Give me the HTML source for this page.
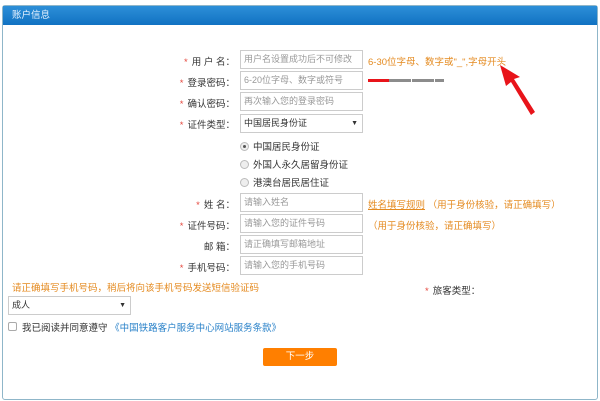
<!DOCTYPE html>
<html><head><meta charset="utf-8"><style>
body{margin:0;width:600px;height:401px;background:#fff;font-family:"Liberation Sans","Noto Sans CJK SC",sans-serif;font-size:9.5px;color:#333;position:relative;overflow:hidden}
.p{position:absolute}
.panel{left:2px;top:5px;width:594px;height:393px;border:1px solid #8fb6c9;border-radius:3px}
.hd{left:3px;top:6px;width:594px;height:19px;background:linear-gradient(#2d8fd8,#1172c2);color:#e8f3ff;font-size:9.5px;line-height:19px;text-indent:9px}
.lb{width:80px;text-align:right;left:155px}
.r{color:#e5483e;margin-right:4px}
.in{left:240px;width:121px;height:17px;border:1px solid #ccc;color:#999;line-height:17px;text-indent:3px;font-size:9px;white-space:nowrap;overflow:hidden}
.o{color:#e48a1f}
.rd{display:inline-block;width:7px;height:7px;border:1px solid #bbb;border-radius:50%;background:#eee;vertical-align:-1px;margin-right:4px;position:relative}
</style></head><body>
<div class="p panel"></div>
<div class="p hd">账户信息</div>

<div class="p lb" style="top:54px"><span class="r">*</span>用 户 名：</div>
<div class="p in" style="top:50px">用户名设置成功后不可修改</div>
<div class="p o" style="left:368px;top:54px">6-30位字母、数字或"_",字母开头</div>

<div class="p lb" style="top:75px"><span class="r">*</span>登录密码：</div>
<div class="p in" style="top:71px">6-20位字母、数字或符号</div>
<div class="p" style="left:368px;top:79px;width:21px;height:3px;background:#e8141a"></div>
<div class="p" style="left:389px;top:79px;width:55px;height:3px;background:repeating-linear-gradient(90deg,#8c8c8c 0 22px,#fff 22px 23px)"></div>

<div class="p lb" style="top:96px"><span class="r">*</span>确认密码：</div>
<div class="p in" style="top:92px">再次输入您的登录密码</div>

<div class="p lb" style="top:117px"><span class="r">*</span>证件类型：</div>
<div class="p in" style="top:114px;color:#333">中国居民身份证<span style="position:absolute;right:4px;font-size:7px">▼</span></div>

<div class="p" style="left:240px;top:139px"><span class="rd"><span style="position:absolute;left:2px;top:2px;width:3px;height:3px;border-radius:50%;background:#555"></span></span>中国居民身份证</div>
<div class="p" style="left:240px;top:157px"><span class="rd"></span>外国人永久居留身份证</div>
<div class="p" style="left:240px;top:175px"><span class="rd"></span>港澳台居民居住证</div>

<div class="p lb" style="top:197px"><span class="r">*</span>姓 名：</div>
<div class="p in" style="top:193px">请输入姓名</div>
<div class="p o" style="left:368px;top:197px"><u>姓名填写规则</u> （用于身份核验，请正确填写）</div>

<div class="p lb" style="top:218px"><span class="r">*</span>证件号码：</div>
<div class="p in" style="top:214px">请输入您的证件号码</div>
<div class="p o" style="left:368px;top:218px">（用于身份核验，请正确填写）</div>

<div class="p lb" style="top:239px">邮 箱：</div>
<div class="p in" style="top:235px">请正确填写邮箱地址</div>

<div class="p lb" style="top:260px"><span class="r">*</span>手机号码：</div>
<div class="p in" style="top:256px">请输入您的手机号码</div>

<div class="p o" style="left:12px;top:280px">请正确填写手机号码，稍后将向该手机号码发送短信验证码</div>
<div class="p" style="left:425px;top:283px"><span class="r">*</span>旅客类型：</div>
<div class="p in" style="left:8px;top:296px;color:#333">成人<span style="position:absolute;right:4px;font-size:7px">▼</span></div>

<div class="p" style="left:8px;top:322px;width:7px;height:7px;border:1px solid #aaa;border-radius:2px"></div>
<div class="p" style="left:22px;top:320px">我已阅读并同意遵守 <span style="color:#2a82c9">《中国铁路客户服务中心网站服务条款》</span></div>

<div class="p" style="left:263px;top:348px;width:74px;height:18px;background:#ff7f00;border-radius:2px;color:#fff;text-align:center;line-height:18px">下一步</div>

<svg class="p" style="left:490px;top:60px" width="60" height="60"><polygon points="10,5 30,17 24,19 45,52 41,55 21,22 16,26" fill="#e8141a"/></svg>
</body></html>
